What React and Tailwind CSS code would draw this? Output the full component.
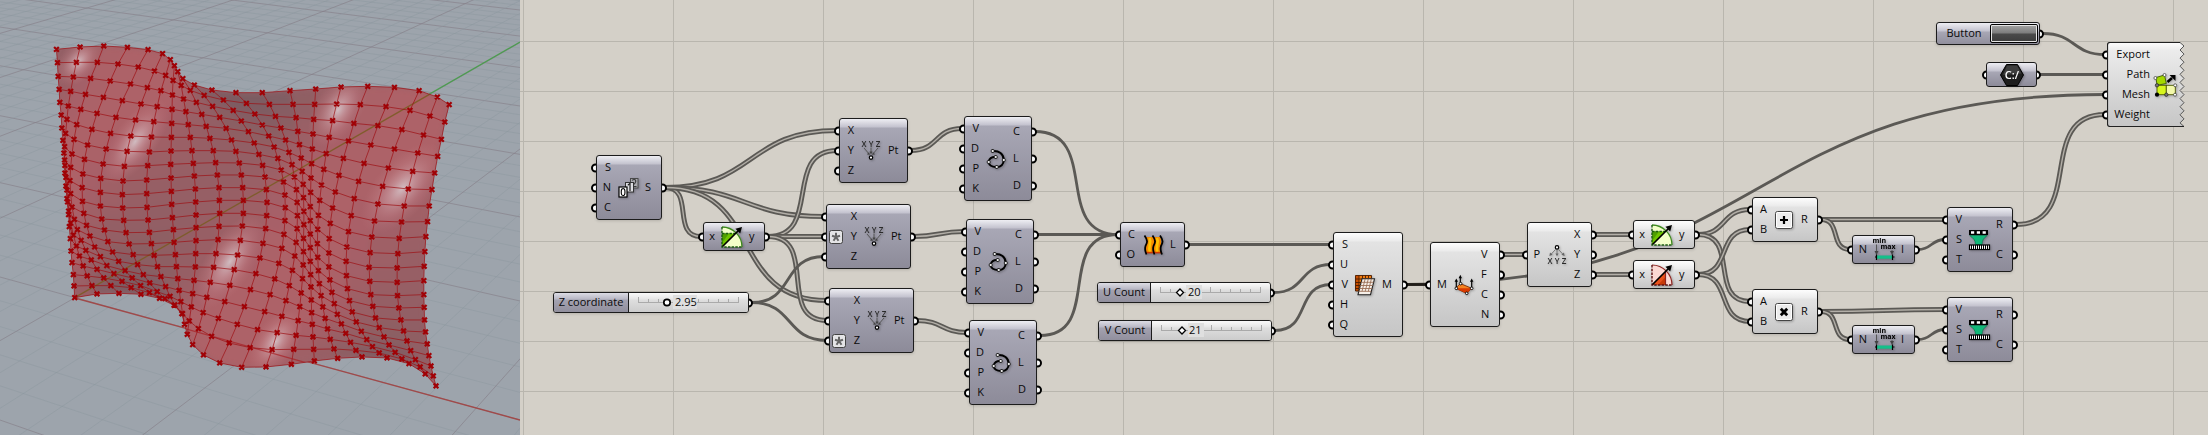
import React from "react";

/* ---------- Viewport: surface vertices, one list per column, top to bottom ---------- */
const COLUMNS = [
  "167,148 170,188 172,229 175,268 177,307 181,345 183,384 186,421 189,459 192,496 195,532 198,570 200,606 203,644 205,680 208,716 210,753 213,788 217,824 219,858 221,893",
  "237,141 226,187 217,231 209,274 202,318 198,358 194,400 191,440 191,480 192,519 195,558 198,596 203,633 209,669 217,705 226,738 235,768 246,798 258,828 272,857 287,882",
  "307,138 288,187 268,235 253,283 239,328 227,374 219,418 213,462 209,502 207,542 209,581 213,621 220,658 229,689 240,721 254,751 270,780 287,808 307,834 328,857 352,880",
  "377,142 349,192 326,243 306,292 287,340 272,388 259,435 250,478 245,522 243,563 244,604 248,640 256,676 266,708 280,741 297,770 316,797 337,821 361,844 388,863 417,883",
  "438,149 409,201 386,252 362,302 343,352 327,400 314,447 305,492 298,535 297,577 297,618 301,657 309,690 319,725 333,756 351,784 370,812 391,834 416,857 442,878 472,895",
  "481,161 457,213 436,263 417,312 401,360 387,408 376,454 368,499 364,543 362,584 363,624 366,661 373,698 382,732 394,764 407,794 424,824 443,849 465,875 488,896 515,916",
  "504,179 490,226 476,272 465,320 455,365 448,411 442,456 437,497 434,540 434,581 435,622 438,660 442,697 448,731 456,766 466,800 476,830 490,860 503,889 517,915 538,941",
  "516,197 512,241 510,285 509,328 508,370 507,412 506,453 505,493 506,534 507,574 508,613 510,653 513,689 515,727 519,764 522,800 526,836 530,871 535,905 540,941 546,973",
  "526,215 536,256 543,297 550,335 557,374 563,412 568,452 572,490 575,528 578,567 579,606 580,645 580,683 580,722 579,761 578,801 574,841 570,881 566,921 560,963 554,1003",
  "541,236 563,271 581,307 597,343 610,379 621,415 631,452 638,488 643,525 648,563 649,601 650,640 648,679 645,719 639,761 632,802 622,847 612,892 601,938 587,986 570,1034",
  "575,255 604,286 629,319 650,352 669,385 685,420 698,454 708,489 714,525 718,563 720,601 720,640 717,678 711,721 703,765 693,809 680,856 665,905 646,955 626,1009 602,1065",
  "627,270 661,300 690,331 714,363 735,395 752,429 766,463 777,496 784,531 788,569 790,607 789,647 786,686 778,730 769,774 757,821 741,869 723,920 702,973 678,1029 650,1089",
  "698,278 729,310 754,342 776,375 795,408 811,441 822,475 832,510 839,546 843,585 844,623 843,662 840,703 834,745 825,790 813,837 799,884 783,935 762,989 740,1043 715,1102",
  "776,278 797,313 815,349 831,384 845,420 855,457 864,494 871,531 877,569 879,607 880,647 879,686 876,727 872,768 865,811 856,857 846,902 834,949 820,998 805,1049 787,1101",
  "858,272 867,313 876,353 881,394 886,434 891,474 894,514 897,553 898,593 899,634 899,674 898,715 898,755 897,795 895,836 891,879 887,920 882,962 876,1006 869,1048 862,1093",
  "934,267 931,313 928,358 926,402 924,447 922,491 920,534 919,577 918,620 918,662 918,702 918,743 918,784 919,824 920,861 921,900 922,938 924,973 926,1011 928,1048 930,1083",
  "1009,261 996,312 984,362 974,412 965,461 958,508 951,555 946,601 942,646 940,688 939,731 940,772 942,812 945,851 950,887 955,921 962,955 969,987 977,1018 988,1047 999,1075",
  "1088,259 1066,314 1047,370 1031,423 1016,475 1003,526 992,576 984,624 977,670 974,716 973,759 973,801 976,840 982,877 989,911 998,943 1010,972 1023,1000 1037,1027 1053,1051 1071,1071",
  "1167,262 1142,320 1118,377 1097,435 1077,490 1061,544 1048,596 1039,647 1031,695 1026,741 1024,784 1025,827 1028,866 1034,902 1042,936 1054,966 1069,994 1085,1019 1102,1040 1122,1059 1145,1074",
  "1240,272 1213,331 1189,389 1167,447 1149,504 1132,559 1118,612 1108,663 1100,711 1095,758 1092,802 1094,844 1097,884 1103,919 1111,954 1122,983 1136,1011 1151,1035 1169,1057 1189,1077 1210,1091",
  "1294,291 1272,348 1253,405 1236,459 1221,514 1208,567 1196,618 1188,666 1181,715 1177,761 1175,804 1175,847 1176,887 1180,924 1186,960 1194,993 1204,1023 1215,1052 1229,1079 1243,1101 1258,1122",
  "1329,314 1316,366 1306,418 1295,469 1286,519 1278,569 1270,618 1265,665 1260,710 1257,755 1255,799 1254,842 1254,884 1255,922 1256,960 1259,996 1264,1032 1269,1067 1275,1098 1282,1128 1290,1158",
].map((c) => c.split(" ").map((p) => p.split(",").map(Number)));

const ROWS = COLUMNS[0].map((_, r) => COLUMNS.map((c) => c[r]));
const OUTLINE = [
  ...ROWS[0],
  ...COLUMNS[21],
  ...[...ROWS[20]].reverse(),
  ...[...COLUMNS[0]].reverse(),
];
const toPoints = (list) => list.map((p) => p.join(",")).join(" ");
const mix = (a, b, t) => Math.round(a + (b - a) * t);

const FACES = [];
for (let c = 0; c < 21; c++) {
  for (let r = 0; r < 20; r++) {
    const a = COLUMNS[c][r];
    const b = COLUMNS[c + 1][r];
    const d = COLUMNS[c + 1][r + 1];
    const e = COLUMNS[c][r + 1];
    const lean = (e[0] - a[0]) / Math.max(14, e[1] - a[1]);
    const fall = Math.max(-0.6, Math.min(0.6, (b[1] - a[1]) / Math.max(20, b[0] - a[0])));
    const t = Math.max(0, Math.min(1, 0.6 - lean * 0.75 + fall * 0.8));
    FACES.push({
      points: toPoints([a, b, d, e]),
      fill: `rgb(${mix(124, 173, t)},${mix(92, 98, t)},${mix(98, 104, t)})`,
    });
  }
}

const CROSSES = COLUMNS.flat()
  .map(([x, y]) => `M${x - 7} ${y - 7}l14 14M${x + 7} ${y - 7}l-14 14`)
  .join("");

const HIGHLIGHTS = [
  [232, 185, 85, 55, -50],
  [400, 425, 150, 65, -55],
  [680, 785, 160, 72, -58],
  [815, 1025, 110, 62, -55],
  [1000, 330, 125, 70, -58],
  [1190, 565, 165, 82, -50],
];

/* Ground plane: five minor steps between neighbouring major lines */
const GROUND = [];
for (let i = -20; i <= 36; i++) {
  const k = i / 5;
  const left = -278 + 2709 / (9.881 - k);
  const right = -272 + 3332 / (9.815 - k);
  GROUND.push({ id: `a${i}`, major: i % 5 === 0, x1: 0, y1: left, x2: 520, y2: right });
}
for (let i = -14; i <= 40; i++) {
  const left = -278 + 2508 / (i / 5 + 4.054);
  GROUND.push({ id: `b${i}`, major: i % 5 === 0, x1: 0, y1: left, x2: 1095, y2: -287 });
}

function Viewport() {
  return (
    <section aria-label="Perspective viewport" className="w-[520px] shrink-0 overflow-hidden bg-[#9da4ac]">
      <svg viewBox="0 0 520 435" width="520" height="435" className="block">
        <defs>
          <radialGradient id="shine">
            <stop offset="0" stopColor="#d8ccd0" stopOpacity="0.85" />
            <stop offset="0.3" stopColor="#d2a8ae" stopOpacity="0.6" />
            <stop offset="0.65" stopColor="#c98a90" stopOpacity="0.28" />
            <stop offset="1" stopColor="#c07c82" stopOpacity="0" />
          </radialGradient>
          <clipPath id="sheet">
            <polygon points={toPoints(OUTLINE)} />
          </clipPath>
          <filter id="soften" x="-5%" y="-5%" width="110%" height="110%">
            <feGaussianBlur stdDeviation="9" />
          </filter>
        </defs>
        {GROUND.map((l) => (
          <line key={l.id} x1={l.x1} y1={l.y1} x2={l.x2} y2={l.y2} stroke={l.major ? "#857f88" : "#8b959d"} strokeWidth="1" strokeOpacity={l.major ? 0.65 : 0.42} />
        ))}
        <line x1="75" y1="298" x2="520" y2="42" stroke="#4d9c50" strokeWidth="1.3" />
        <line x1="75" y1="298" x2="520" y2="420" stroke="#a04a4a" strokeWidth="1.3" />
        <g transform="scale(0.338 0.3333)">
          <polygon points={toPoints(OUTLINE)} fill="#9a636a" />
          <g clipPath="url(#sheet)">
            <g filter="url(#soften)">
              {FACES.map((f) => (
                <polygon key={f.points} points={f.points} fill={f.fill} stroke={f.fill} strokeWidth="3" />
              ))}
            </g>
            {HIGHLIGHTS.map(([x, y, rx, ry, a]) => (
              <ellipse key={x} cx={x} cy={y} rx={rx} ry={ry} fill="url(#shine)" transform={`rotate(${a} ${x} ${y})`} />
            ))}
            <path d="M221 893L1290 272" stroke="#7a5c22" strokeWidth="4" strokeOpacity="0.85" />
            <path d="M221 893L950 1101" stroke="#a81f24" strokeWidth="4" strokeOpacity="0.7" />
          </g>
          <g fill="none" stroke="#9c0f14" strokeWidth="2.8" strokeOpacity="0.75">
            {COLUMNS.map((c, i) => (
              <polyline key={`c${i}`} points={toPoints(c)} />
            ))}
            {ROWS.map((r, i) => (
              <polyline key={`r${i}`} points={toPoints(r)} />
            ))}
          </g>
          <path d={CROSSES} stroke="#a00206" strokeWidth="6.5" fill="none" />
        </g>
      </svg>
    </section>
  );
}

/* ---------- Wires, in canvas coordinates ---------- */
const WIRES = [
  [145, 187, 317, 130, 2],
  [145, 187, 304, 216, 2],
  [145, 187, 181, 236, 2],
  [145, 187, 307, 300, 2],
  [248, 236, 317, 150, 2],
  [248, 236, 304, 236, 2],
  [248, 236, 307, 320, 2],
  [232, 302, 304, 256, 1],
  [232, 302, 307, 340, 1],
  [391, 150, 442, 128, 2],
  [394, 236, 444, 231, 2],
  [397, 320, 447, 332, 2],
  [515, 131, 598, 234, 1],
  [517, 234, 598, 234, 1],
  [520, 335, 598, 234, 1],
  [668, 244, 811, 244, 1],
  [754, 292, 811, 264, 1],
  [755, 330, 811, 284, 1],
  [887, 284, 1585, 94, 1],
  [887, 284, 908, 284, 3],
  [983, 254, 1005, 254, 2],
  [1075, 234, 1111, 234, 2],
  [1075, 274, 1111, 274, 2],
  [1178, 234, 1230, 209, 2],
  [1178, 234, 1230, 301, 2],
  [1178, 274, 1230, 229, 2],
  [1178, 274, 1230, 321, 2],
  [1301, 219, 1425, 219, 2],
  [1301, 219, 1330, 249, 2],
  [1398, 249, 1425, 239, 1],
  [1301, 311, 1425, 309, 2],
  [1301, 311, 1330, 339, 2],
  [1398, 339, 1425, 329, 1],
  [1496, 224, 1585, 114, 2],
  [1523, 33, 1585, 54, 1],
  [1520, 74, 1585, 74, 1],
];

function Wires() {
  return (
    <svg className="pointer-events-none absolute inset-0 h-full w-full" fill="none" aria-hidden="true">
      {WIRES.map(([x1, y1, x2, y2, kind], i) => {
        const reach = Math.hypot(x2 - x1, y2 - y1) / 2;
        const d = `M${x1} ${y1 + 0.5}C${x1 + reach} ${y1 + 0.5} ${x2 - reach} ${y2 + 0.5} ${x2} ${y2 + 0.5}`;
        if (kind === 2) {
          return (
            <g key={i}>
              <path d={d} stroke="#5b5955" strokeWidth="5" />
              <path d={d} stroke="#b3afa8" strokeWidth="1.4" />
            </g>
          );
        }
        return <path key={i} d={d} stroke={kind === 3 ? "#211d19" : "#5b5955"} strokeWidth="2.8" />;
      })}
    </svg>
  );
}

/* ---------- Icons ---------- */
function Icon({ children }) {
  return (
    <svg width="24" height="24" viewBox="0 0 24 24" fill="none" className="shrink-0 overflow-visible drop-shadow-[1px_1px_1px_rgba(0,0,0,0.25)]" aria-hidden="true">
      {children}
    </svg>
  );
}
const SVG_FONT = "'Open Sans', 'Noto Sans', sans-serif";

const SeriesIcon = () => (
  <Icon>
    <g fontFamily={SVG_FONT} fontSize="10" fontWeight="600" textAnchor="middle">
      <rect x="14.5" y="2.5" width="7.5" height="9.5" fill="#a9a9ae" stroke="#4a4a4a" />
      <text x="18.2" y="11" fill="#3a3a3a">2</text>
      <rect x="9.5" y="6.5" width="8" height="9.5" fill="#dcdce0" stroke="#333" />
      <text x="13.5" y="15" fill="#111">1</text>
      <rect x="3" y="11" width="8" height="10" fill="#fff" stroke="#000" strokeWidth="1.2" />
      <text x="7" y="19.800" fill="#000">0</text>
    </g>
  </Icon>
);
const PointIcon = () => (
  <Icon>
    <g fontFamily={SVG_FONT} fontSize="8" fontWeight="600" fill="#2a2a2a" textAnchor="middle">
      <text x="5" y="7.500">X</text>
      <text x="12" y="7.500">Y</text>
      <text x="19" y="7.500">Z</text>
    </g>
    <path d="M5 9l4.6 5.400M12 8.500v5.500M19 9l-4.600 5.400" stroke="#555" strokeWidth="1" />
    <path d="M10.800 16l-3-.8 2.300-2zM10.500 12.500h3L12 15.600zM13.200 16l3-.8-2.300-2z" fill="#444" />
    <circle cx="12" cy="18.600" r="1.700" fill="#fff" stroke="#000" strokeWidth="1.200" />
  </Icon>
);
const DeconstructPointIcon = () => (
  <Icon>
    <circle cx="12" cy="4.400" r="1.700" fill="#fff" stroke="#000" strokeWidth="1.200" />
    <path d="M10.400 6.600L6 11.400M12 6.800v5M13.600 6.600l4.400 4.800" stroke="#777" strokeWidth="1" />
    <path d="M4.400 13l.6-3.400 2.600 2.200zM10.400 10.400h3.200L12 13.200zM19.600 13l-.6-3.400-2.600 2.200z" fill="#666" />
    <g fontFamily={SVG_FONT} fontSize="8" fontWeight="600" fill="#2a2a2a" textAnchor="middle">
      <text x="5" y="20.500">X</text>
      <text x="12" y="20.500">Y</text>
      <text x="19" y="20.500">Z</text>
    </g>
  </Icon>
);
const CurveIcon = () => (
  <Icon>
    <path d="M8.7 4C15 3.4 19.6 7 19.8 13C19.5 17 17 20 12.7 20C8 20.2 4.9 18 4.7 15C4.5 12 8 9.4 11.7 10" stroke="#000" strokeWidth="2" />
    {[[8.7, 4], [19.8, 13], [12.7, 20], [4.7, 15], [11.7, 10]].map(([x, y]) => (
      <rect key={x} x={x - 1.4} y={y - 1.4} width="2.8" height="2.8" rx="0.7" fill="#fff" stroke="#000" strokeWidth="0.9" />
    ))}
  </Icon>
);
const LoftIcon = () => (
  <Icon>
    <path d="M4 4H19C22 9 18 14 20 20H5C3 14 7 9 4 4Z" fill="#f58a00" />
    <path d="M8.500 5C11 10 6.500 14 9 19M16 5C18.500 10 14 14 16.500 19" stroke="#ffc400" strokeWidth="2.600" />
    <path d="M5 19.600h15" stroke="#d23a00" strokeWidth="1.600" />
    <path d="M3.500 2.500C7.500 8 6 10 4.500 13C3.500 16 4 18 5.500 21.500M11.500 2.500C15.500 8 14 10 12.500 13C11.500 16 12 18 13.500 21.500M19 2.500C23 8 21.500 10 20 13C19 16 19.500 18 21 21.500" stroke="#000" strokeWidth="1.800" />
  </Icon>
);
const Arrow = () => (
  <>
    <path d="M2.500 21.500L19 5" stroke="#000" strokeWidth="1.700" />
    <path d="M22 2l-1.800 6.600L15.400 3.800z" fill="#000" />
  </>
);
const GreenGraphIcon = () => (
  <Icon>
    <path d="M2 2A20 20 0 0 1 22 22H2Z" fill="#f3ffc9" />
    <path d="M2 8.500H15L2 22Z" fill="#6fc400" />
    <path d="M2 8.500H9L2 18Z" fill="#4f9e00" />
    <path d="M2 2A20 20 0 0 1 22 22" stroke="#3d8a1d" strokeWidth="1.3" />
    <path d="M2 8.500H15M2 2V22H22" stroke="#1c5c10" strokeWidth="1.400" strokeDasharray="2.500 1.200" />
    <Arrow />
  </Icon>
);
const RedGraphIcon = () => (
  <Icon>
    <path d="M2 2A20 20 0 0 1 22 22H2Z" fill="#fbd9d4" />
    <path d="M2 22L15.500 8.500V22Z" fill="#e8511c" />
    <path d="M8 22L15.500 14V22Z" fill="#c73a08" />
    <path d="M2 2A20 20 0 0 1 22 22M15.500 9V22" stroke="#8f2420" strokeWidth="1.200" />
    <path d="M2 2V22H22" stroke="#5c1010" strokeWidth="1.400" strokeDasharray="2.500 1.200" />
    <Arrow />
  </Icon>
);
const MeshIcon = () => (
  <Icon>
    <rect x="2.500" y="2.500" width="16" height="15.500" fill="#f07c10" />
    <path d="M2.500 2.500V18H6V2.500Z" fill="#c94f00" />
    <path d="M2.500 2.500H18.500V18H2.500ZM6 2.500V18M9.500 2.500V18M12.500 2.500V18M15.500 2.500V18M2.500 6H18.500M2.500 9.500H18.500M2.500 12.500H18.500M2.500 15.500H18.500" stroke="#4a1c00" strokeWidth="0.9" />
    <path d="M9 5.800H21.500L17.500 21.700H5Z" fill="#f6efe8" stroke="#222" strokeWidth="1.100" />
    <path d="M8 9.300H20.500M7.200 12.500H19.700M6.400 15.500H19M5.700 18.300H18.200M12.200 5.800L9 18.300M15.300 5.800L12.200 18.300M18.400 5.800L15.300 18.300" stroke="#9b6f57" strokeWidth="0.9" />
  </Icon>
);
const DeconstructMeshIcon = () => (
  <Icon>
    <path d="M3.700 15.300L8.300 10.500L19.700 15.300L14.700 20.500Z" fill="#f58220" stroke="#6b1f00" strokeWidth="0.8" />
    <path d="M3.700 15.300H19.700L14.700 20.500Z" fill="#d93a00" />
    <path d="M4.300 15V8M8.300 10V4M19.700 15V8" stroke="#000" strokeWidth="1.200" />
    <path d="M4.300 5.400l1.700 3.400H2.600zM8.300 1.800L10 5.200H6.600zM19.700 5.400l1.700 3.400H18z" fill="#000" />
    {[[4.3, 15.3], [8.6, 10.6], [19.7, 15.3], [14.7, 20.3]].map(([x, y]) => (
      <circle key={x} cx={x} cy={y} r="1.300" fill="#fff" stroke="#000" strokeWidth="0.900" />
    ))}
  </Icon>
);
const OperatorIcon = ({ cross }) => (
  <Icon>
    <rect x="3.500" y="3.500" width="17" height="17" rx="2" fill="#ececec" stroke="#444" />
    <rect x="4.500" y="4.500" width="15" height="15" rx="1" stroke="#fff" />
    <path d={cross ? "M8.800 8.800l6.400 6.400M15.200 8.800l-6.400 6.400" : "M12 8v8M8 12h8"} stroke="#000" strokeWidth={cross ? 2.8 : 2.2} />
  </Icon>
);
const BoundsIcon = () => (
  <Icon>
    <g fontFamily={SVG_FONT} fontSize="7" fontWeight="700" fill="#000" textAnchor="middle">
      <text x="7.300" y="5.300">min</text>
      <text x="16" y="10.700">max</text>
    </g>
    <path d="M4.500 6.500V14M20 12V14" stroke="#555" />
    <path d="M2.500 13h4L4.500 17zM18 13h4L20 17z" fill="#444" />
    <rect x="5" y="17.500" width="15" height="3.200" fill="#14c08a" />
    <path d="M4.500 16.500v5.500M20.500 16.500v5.500M3 19h1.500M20.500 19h2" stroke="#000" strokeWidth="1.200" />
  </Icon>
);
const RemapIcon = () => (
  <Icon>
    <path d="M2.700 7.500C6 10 8.500 12 8.500 16.500H15C15 12 17 10 20.200 7.500Z" fill="#12b878" stroke="#067a4e" strokeWidth="0.700" />
    <rect x="2" y="2" width="19" height="5" fill="#000" />
    <path d="M4 3.200h3.200v2.500H4zM9.800 3.200H13v2.500H9.800zM15.600 3.200h3.200v2.500h-3.200z" fill="#fff" />
    <rect x="2.500" y="17" width="20" height="4.500" fill="#fff" stroke="#000" strokeWidth="1.200" />
    <path d="M4.500 17v4.500M6.500 17v4.500M8.500 17v4.500M10.500 17v4.500M12.500 17v4.500M14.500 17v4.500M16.500 17v4.500M18.500 17v4.500M20.500 17v4.500" stroke="#000" />
  </Icon>
);
const ExportIcon = () => (
  <Icon>
    <path d="M3 4.500L11.500 2L13.300 10.500L4 12.300Z" fill="#a4d800" stroke="#3e5a00" strokeWidth="0.900" />
    <rect x="4" y="12.300" width="9.300" height="9.400" fill="#d6f61c" stroke="#4c5a00" strokeWidth="0.900" />
    <rect x="13.300" y="12.300" width="9" height="9.400" fill="#f2f8ab" stroke="#4c5a00" strokeWidth="0.900" />
    <path d="M14.500 9L19 5" stroke="#000" strokeWidth="2.600" />
    <path d="M22.500 2v6L16.500 2z" fill="#000" />
    <circle cx="4" cy="21.700" r="2.100" fill="#000" />
    {[[4, 12.3], [13.3, 21.7]].map(([x, y]) => (
      <circle key={x} cx={x} cy={y} r="1.700" fill="#777" stroke="#222" strokeWidth="0.700" />
    ))}
    {[[2.4, 5], [11.5, 2], [22.2, 12.3], [22, 21.7]].map(([x, y]) => (
      <circle key={x} cx={x} cy={y} r="1.500" fill="#fff" stroke="#333" strokeWidth="0.700" />
    ))}
  </Icon>
);

/* ---------- Nodes ---------- */
const PLUM = "bg-[linear-gradient(to_bottom,#eeeef3_0,#c3c2ce_8px,#a8a7b5_9px,#8d8b99_100%)]";
const PALE = "bg-[linear-gradient(to_bottom,#fdfdfd_0,#ebebeb_8px,#e3e3e3_9px,#c6c6c6_100%)]";

function Port({ side }) {
  return (
    <span
      className={`absolute top-1/2 -z-10 h-[9px] w-[9px] -translate-y-1/2 rounded-full border-2 border-black bg-white ${
        side === "in" ? "-left-[5px]" : "-right-[5px]"
      }`}
    />
  );
}

function StarBadge() {
  return (
    <svg width="14" height="14" viewBox="0 0 14 14" className="shrink-0" aria-hidden="true">
      <rect x="0.500" y="0.500" width="13" height="13" rx="2" fill="#e4e4e6" stroke="#444" />
      <path d="M7 7V2.800M7 7L3 5.700M7 7L11 5.700M7 7L4.500 10.700M7 7L9.500 10.700" stroke="#666" strokeWidth="2" />
    </svg>
  );
}

function JaggedBody() {
  const teeth = Array.from({ length: 10 }, (_, i) => `L77 ${4 + i * 8.1}L73 ${8 + i * 8.1}`).join("");
  return (
    <svg viewBox="0 0 78 85" className="absolute inset-0 h-full w-full" aria-hidden="true">
      <defs>
        <linearGradient id="jagged" x1="0" y1="0" x2="0" y2="1">
          <stop offset="0" stopColor="#fdfdfd" />
          <stop offset="0.1" stopColor="#ebebeb" />
          <stop offset="1" stopColor="#c6c6c6" />
        </linearGradient>
      </defs>
      <path d={`M73 0.500${teeth}L77 84.500H3Q0.500 84.500 0.500 82V3Q0.500 0.500 3 0.500Z`} fill="url(#jagged)" />
      <path d={`M73 0.500${teeth}L77 84.500`} fill="none" stroke="#555" strokeWidth="1" />
      <path d="M73 0.500H3Q0.500 0.500 0.500 3V82Q0.500 84.500 3 84.500H77" fill="none" stroke="#222" strokeWidth="1.200" />
    </svg>
  );
}

function Node({ place, tone = PLUM, ins, outs, icon, inWidth = "w-[15px]", outWidth = "w-[17px]", badge, jagged }) {
  return (
    <article className={`absolute isolate flex pt-[3px] pb-[2px] ${place}`}>
      {jagged ? <JaggedBody /> : <div className={`absolute inset-0 rounded-[3px] border border-[#1c1c1c] shadow-[0_1px_3px_rgba(0,0,0,0.15)] ${tone}`} />}
      <div className={`flex shrink-0 flex-col ${inWidth}`}>
        {ins.map((t) => (
          <div key={t} className="relative flex flex-1 items-center justify-end">
            <Port side="in" />
            {badge === t && (
              <span className="absolute left-[3px]">
                <StarBadge />
              </span>
            )}
            <span className="relative -mt-[2px] leading-4">{t}</span>
          </div>
        ))}
      </div>
      <div className="relative flex flex-1 items-center justify-center">{icon}</div>
      <div className={`flex shrink-0 flex-col ${outWidth}`}>
        {outs.map((t) => (
          <div key={t} className="relative flex flex-1 items-center">
            <Port side="out" />
            <span className="relative -mt-[2px] leading-4">{t}</span>
          </div>
        ))}
      </div>
    </article>
  );
}

function Slider({ id, place, label, labelWidth, value, min, max, step, knob, textPad, round }) {
  return (
    <div className={`absolute isolate flex h-[21px] ${place}`}>
      <span className="absolute top-1/2 -right-[4px] -z-10 h-[9px] w-[9px] -translate-y-1/2 rounded-full border-2 border-black bg-white" />
      <div className="flex flex-1 overflow-hidden rounded-[3px] border border-[#1c1c1c] shadow-[0_1px_3px_rgba(0,0,0,0.15)]">
        <label htmlFor={id} className={`flex items-center justify-center border-r border-[#1c1c1c] bg-[linear-gradient(to_bottom,#dcdce4_0,#b9b8c5_6px,#a3a2b0_7px,#918f9d_100%)] pb-[2px] leading-4 whitespace-nowrap ${labelWidth}`}>
          {label}
        </label>
        <div className="relative flex flex-1 items-center bg-[linear-gradient(to_bottom,#fafafa_0,#e6e6e6_6px,#dedede_7px,#cccccc_100%)]">
          <svg width="119" height="19" viewBox="0 0 119 19" fill="none" className="absolute inset-0" aria-hidden="true">
            <path d="M9 9.500h101M9.500 4v6M19.500 6v4M29.500 6v4M39.500 6v4M49.500 6v4M59.500 4v6M69.500 6v4M79.500 6v4M89.500 6v4M99.500 6v4M109.500 4v6" stroke="#aaa" />
            <rect x={knob + 6} y="2" width={round ? 24 : 16} height="14" fill="#dfdfdf" />
            {round ? (
              <circle cx={knob} cy="9.500" r="3.200" fill="#fff" stroke="#000" strokeWidth="1.700" />
            ) : (
              <path d={`M${knob} 6l3.500 3.500L${knob} 13l-3.500-3.500z`} fill="#fff" stroke="#000" strokeWidth="1.300" />
            )}
          </svg>
          <output htmlFor={id} className={`relative pb-[2px] leading-4 ${textPad}`}>{value}</output>
          <input id={id} type="range" min={min} max={max} step={step} defaultValue={value} className="absolute inset-0 h-full w-full cursor-pointer opacity-0" />
        </div>
      </div>
    </div>
  );
}

function Canvas() {
  const abc = ["V", "D", "P", "K"];
  const cld = ["C", "L", "D"];
  const xyz = ["X", "Y", "Z"];
  return (
    <main className="relative flex-1 overflow-hidden bg-[#d4d0c8] bg-[linear-gradient(to_right,#b9b6ae_1px,transparent_1px),linear-gradient(to_bottom,#b9b6ae_1px,transparent_1px)] bg-[size:150px_50px] bg-[position:3px_41px] font-['Open_Sans','Noto_Sans',sans-serif] text-[11px] text-[#0a0a0a]">
      <Wires />
      <Node place="left-[76px] top-[155px] w-[66px] h-[65px]" ins={["S", "N", "C"]} outs={["S"]} icon={<SeriesIcon />} />
      <Node place="left-[319px] top-[118px] w-[69px] h-[65px]" ins={xyz} outs={["Pt"]} outWidth="w-[20px]" icon={<PointIcon />} />
      <Node place="left-[306px] top-[204px] w-[85px] h-[65px]" ins={xyz} outs={["Pt"]} inWidth="w-[31px]" outWidth="w-[20px]" badge="Y" icon={<PointIcon />} />
      <Node place="left-[309px] top-[288px] w-[85px] h-[65px]" ins={xyz} outs={["Pt"]} inWidth="w-[31px]" outWidth="w-[20px]" badge="Z" icon={<PointIcon />} />
      <Node place="left-[183px] top-[222px] w-[62px] h-[29px]" ins={["x"]} outs={["y"]} inWidth="w-[12px]" outWidth="w-[16px]" icon={<GreenGraphIcon />} />
      <Node place="left-[444px] top-[116px] w-[68px] h-[85px]" ins={abc} outs={cld} outWidth="w-[19px]" icon={<CurveIcon />} />
      <Node place="left-[446px] top-[219px] w-[68px] h-[85px]" ins={abc} outs={cld} outWidth="w-[19px]" icon={<CurveIcon />} />
      <Node place="left-[449px] top-[320px] w-[68px] h-[85px]" ins={abc} outs={cld} outWidth="w-[19px]" icon={<CurveIcon />} />
      <Node place="left-[600px] top-[222px] w-[65px] h-[45px]" ins={["C", "O"]} outs={["L"]} outWidth="w-[15px]" icon={<LoftIcon />} />
      <Node place="left-[813px] top-[232px] w-[70px] h-[105px]" tone={PALE} ins={["S", "U", "V", "H", "Q"]} outs={["M"]} outWidth="w-[21px]" icon={<MeshIcon />} />
      <Node place="left-[910px] top-[242px] w-[70px] h-[85px]" tone={PALE} ins={["M"]} outs={["V", "F", "C", "N"]} inWidth="w-[17px]" outWidth="w-[19px]" icon={<DeconstructMeshIcon />} />
      <Node place="left-[1007px] top-[222px] w-[65px] h-[65px]" tone={PALE} ins={["P"]} outs={xyz} inWidth="w-[13px]" outWidth="w-[18px]" icon={<DeconstructPointIcon />} />
      <Node place="left-[1113px] top-[220px] w-[62px] h-[29px]" tone={PALE} ins={["x"]} outs={["y"]} inWidth="w-[12px]" outWidth="w-[16px]" icon={<GreenGraphIcon />} />
      <Node place="left-[1113px] top-[260px] w-[62px] h-[29px]" tone={PALE} ins={["x"]} outs={["y"]} inWidth="w-[12px]" outWidth="w-[16px]" icon={<RedGraphIcon />} />
      <Node place="left-[1232px] top-[197px] w-[66px] h-[45px]" tone={PALE} ins={["A", "B"]} outs={["R"]} icon={<OperatorIcon />} />
      <Node place="left-[1232px] top-[289px] w-[66px] h-[45px]" tone={PALE} ins={["A", "B"]} outs={["R"]} icon={<OperatorIcon cross />} />
      <Node place="left-[1332px] top-[235px] w-[63px] h-[29px]" ins={["N"]} outs={["I"]} outWidth="w-[14px]" icon={<BoundsIcon />} />
      <Node place="left-[1332px] top-[325px] w-[63px] h-[29px]" ins={["N"]} outs={["I"]} outWidth="w-[14px]" icon={<BoundsIcon />} />
      <Node place="left-[1427px] top-[207px] w-[66px] h-[65px]" ins={["V", "S", "T"]} outs={["R", "C"]} icon={<RemapIcon />} />
      <Node place="left-[1427px] top-[297px] w-[66px] h-[65px]" ins={["V", "S", "T"]} outs={["R", "C"]} icon={<RemapIcon />} />
      <Node place="left-[1587px] top-[42px] w-[78px] h-[85px]" jagged ins={["Export", "Path", "Mesh", "Weight"]} outs={[]} inWidth="w-[43px]" outWidth="w-[6px]" icon={<ExportIcon />} />

      <Slider id="z-coordinate" place="left-[33px] top-[292px] w-[196px]" label="Z coordinate" labelWidth="w-[75px]" value="2.95" min="0" max="10" step="0.01" knob={38} textPad="pl-[46px]" round />
      <Slider id="u-count" place="left-[577px] top-[282px] w-[174px]" label="U Count" labelWidth="w-[53px]" value="20" min="0" max="100" step="1" knob={29} textPad="pl-[37px]" />
      <Slider id="v-count" place="left-[578px] top-[320px] w-[174px]" label="V Count" labelWidth="w-[53px]" value="21" min="0" max="100" step="1" knob={30} textPad="pl-[37px]" />

      <div className="absolute top-[22px] left-[1416px] isolate flex h-[23px] w-[104px]">
        <span className="absolute top-1/2 -right-[4px] -z-10 h-[9px] w-[9px] -translate-y-1/2 rounded-full border-2 border-black bg-white" />
        <div className="flex flex-1 items-center rounded-[3px] border border-[#1c1c1c] bg-[linear-gradient(to_bottom,#eeeef3_0,#c3c2ce_8px,#a8a7b5_9px,#918f9d_100%)] p-px shadow-[0_1px_3px_rgba(0,0,0,0.15)]">
          <span id="button-label" className="flex-1 pb-[2px] text-center leading-4">Button</span>
          <button type="button" aria-labelledby="button-label" className="h-[19px] w-[48px] rounded-[2px] border border-black bg-[linear-gradient(to_bottom,#a4a4a4_0,#7c7c7c_8px,#4a4a4a_9px,#3c3c3c_100%)] outline -outline-offset-2 outline-[#e4e4e4]" />
        </div>
      </div>

      <div className="absolute top-[62px] left-[1466px] isolate flex h-[25px] w-[51px]">
        <span className="absolute top-1/2 -left-[4px] -z-10 h-[9px] w-[9px] -translate-y-1/2 rounded-full border-2 border-black bg-white" />
        <span className="absolute top-1/2 -right-[4px] -z-10 h-[9px] w-[9px] -translate-y-1/2 rounded-full border-2 border-black bg-white" />
        <div className={`flex flex-1 items-center justify-center rounded-[3px] border border-[#1c1c1c] ${PLUM}`}>
          <Icon>
            <path d="M6.500 1.500h11L23.500 12l-6 10.500h-11L.5 12z" fill="#1d1d1d" stroke="#000" />
            <path d="M7 2.500h10l4.500 8L3 12z" fill="#3d3d3d" />
            <text x="12" y="16" textAnchor="middle" fontFamily={SVG_FONT} fontSize="11" fontWeight="600" fill="#fff">C:/</text>
          </Icon>
        </div>
      </div>
    </main>
  );
}

export default function App() {
  return (
    <div className="flex min-h-screen w-full overflow-hidden bg-[#d4d0c8]">
      <Viewport />
      <Canvas />
    </div>
  );
}
